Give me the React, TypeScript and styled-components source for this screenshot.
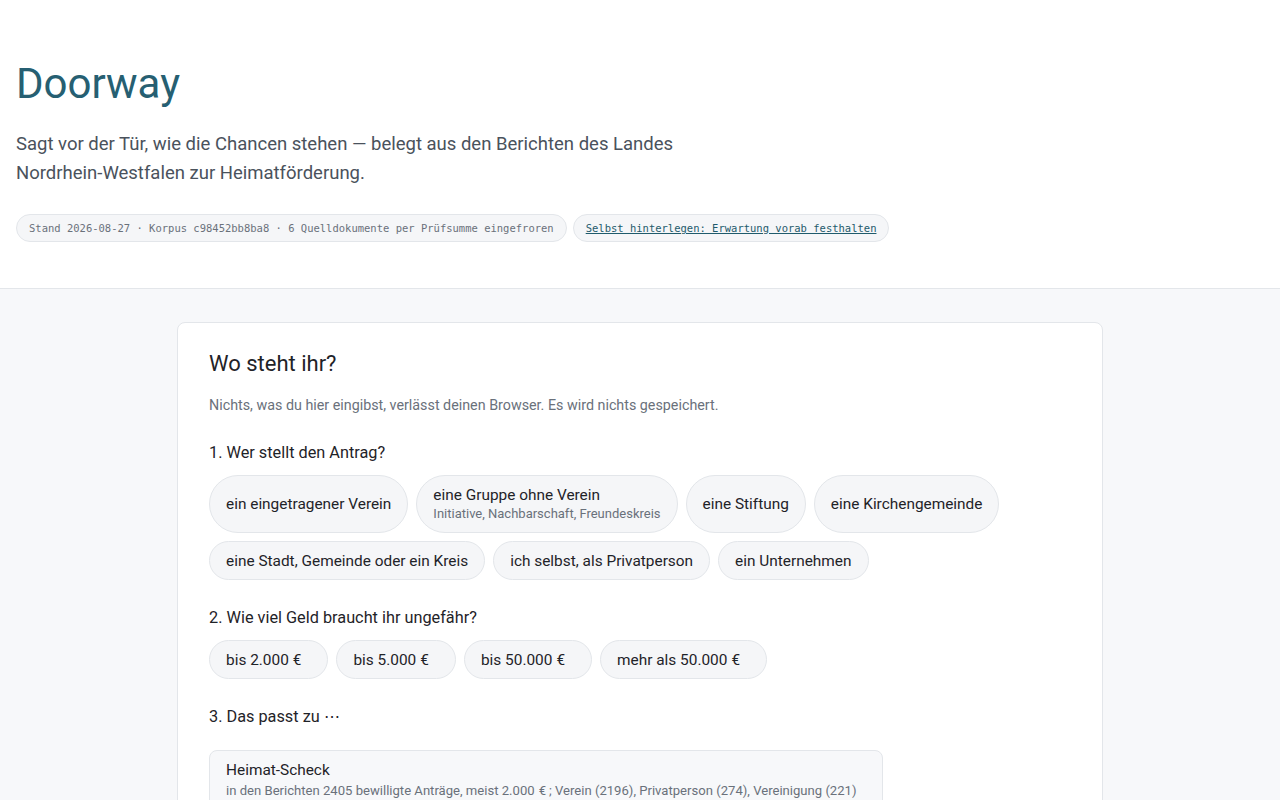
import styled, { createGlobalStyle } from 'styled-components';

const GlobalStyle = createGlobalStyle`
  body {
    margin: 0;
    background: #f7f8fa;
    font-family: Roboto, "Liberation Sans", sans-serif;
    color: #1f2328;
  }
`;

const Header = styled.header`
  background: #fff;
  border-bottom: 1px solid #e3e6ea;
  padding: 57px 16px 46px;
`;

const Title = styled.h1`
  margin: 0;
  font-size: 42px;
  font-weight: 400;
  line-height: 54px;
  color: #265f72;
`;

const Lead = styled.p`
  margin: 19px 0 0;
  max-width: 690px;
  font-size: 18.5px;
  line-height: 29px;
  color: #4a525c;
`;

const MetaRow = styled.div`
  display: flex;
  gap: 6px;
  margin-top: 26px;
`;

const MetaPill = styled.span`
  display: inline-flex;
  align-items: center;
  height: 26px;
  padding: 0 12px;
  border: 1px solid #e3e6ea;
  border-radius: 999px;
  background: #f5f6f8;
  font-family: "DejaVu Sans Mono", monospace;
  font-size: 10.5px;
  color: #6a717b;
`;

const MetaLink = styled.a`
  color: #1f5b6c;
  text-decoration: underline;
`;

const Main = styled.main`
  padding: 33px 16px 40px;
`;

const Card = styled.section`
  max-width: 862px;
  margin: 0 auto;
  padding: 27px 31px 32px;
  background: #fff;
  border: 1px solid #e3e6ea;
  border-radius: 8px;
`;

const CardTitle = styled.h2`
  margin: 0;
  font-size: 22px;
  font-weight: 400;
  line-height: 28px;
  color: #1f2328;
`;

const Note = styled.p`
  margin: 17px 0 0;
  font-size: 14.3px;
  line-height: 20px;
  color: #6a717b;
`;

const Step = styled.div`
  margin-top: 27px;
`;

const StepLabel = styled.div`
  font-size: 16.3px;
  line-height: 22px;
  color: #1f2328;
  margin-bottom: 11px;
`;

const ChipGroup = styled.div`
  display: flex;
  flex-wrap: wrap;
  gap: 8px;
  max-width: 820px;
`;

const Chip = styled.button<{ $tall?: boolean }>`
  display: inline-flex;
  flex-direction: column;
  justify-content: center;
  align-items: flex-start;
  min-height: 39px;
  padding: ${(p) => (p.$tall ? '9px 16px' : '0 16px')};
  border: 1px solid #e3e6ea;
  border-radius: 999px;
  background: #f5f6f8;
  font-family: inherit;
  font-size: 15.4px;
  line-height: 20px;
  color: #1f2328;
  cursor: pointer;
`;

const ChipHint = styled.span`
  font-size: 13px;
  line-height: 18px;
  color: #6a717b;
`;

// the euro sign sits a bit apart from the number, like a unit
const Euro = styled.span<{ $tail?: number }>`
  margin: 0 ${(p) => p.$tail ?? 10}px 0 4px;
`;

const Match = styled.div`
  max-width: 640px;
  margin-top: 22px;
  padding: 9px 16px 10px;
  border: 1px solid #e3e6ea;
  border-radius: 8px;
  background: #f7f8fa;
`;

const MatchName = styled.div`
  font-size: 15.4px;
  line-height: 20px;
`;

const MatchInfo = styled.div`
  margin-top: 2px;
  font-size: 13.1px;
  line-height: 18px;
  color: #6a717b;
`;

const applicants: { label: string; hint?: string }[] = [
  { label: 'ein eingetragener Verein' },
  { label: 'eine Gruppe ohne Verein', hint: 'Initiative, Nachbarschaft, Freundeskreis' },
  { label: 'eine Stiftung' },
  { label: 'eine Kirchengemeinde' },
  { label: 'eine Stadt, Gemeinde oder ein Kreis' },
  { label: 'ich selbst, als Privatperson' },
  { label: 'ein Unternehmen' },
];

const amounts = ['bis 2.000', 'bis 5.000', 'bis 50.000', 'mehr als 50.000'];

export default function App() {
  return (
    <>
      <GlobalStyle />
      <Header>
        <Title>Doorway</Title>
        <Lead>
          Sagt vor der Tür, wie die Chancen stehen — belegt aus den Berichten des Landes
          Nordrhein-Westfalen zur Heimatförderung.
        </Lead>
        <MetaRow>
          <MetaPill>
            Stand 2026-08-27 · Korpus c98452bb8ba8 · 6 Quelldokumente per Prüfsumme eingefroren
          </MetaPill>
          <MetaPill>
            <MetaLink href="#">Selbst hinterlegen: Erwartung vorab festhalten</MetaLink>
          </MetaPill>
        </MetaRow>
      </Header>
      <Main>
        <Card>
          <CardTitle>Wo steht ihr?</CardTitle>
          <Note>Nichts, was du hier eingibst, verlässt deinen Browser. Es wird nichts gespeichert.</Note>

          <Step>
            <StepLabel>1. Wer stellt den Antrag?</StepLabel>
            <ChipGroup>
              {applicants.map((a) => (
                <Chip key={a.label} $tall={!!a.hint}>
                  {a.label}
                  {a.hint && <ChipHint>{a.hint}</ChipHint>}
                </Chip>
              ))}
            </ChipGroup>
          </Step>

          <Step>
            <StepLabel>2. Wie viel Geld braucht ihr ungefähr?</StepLabel>
            <ChipGroup>
              {amounts.map((a) => (
                <Chip key={a}>
                  <span>
                    {a}
                    <Euro>€</Euro>
                  </span>
                </Chip>
              ))}
            </ChipGroup>
          </Step>

          <Step>
            <StepLabel>3. Das passt zu ⋯</StepLabel>
            <Match>
              <MatchName>Heimat-Scheck</MatchName>
              <MatchInfo>
                in den Berichten 2405 bewilligte Anträge, meist 2.000<Euro $tail={3}>€</Euro>; Verein (2196),
                Privatperson (274), Vereinigung (221)
              </MatchInfo>
            </Match>
          </Step>
        </Card>
      </Main>
    </>
  );
}
